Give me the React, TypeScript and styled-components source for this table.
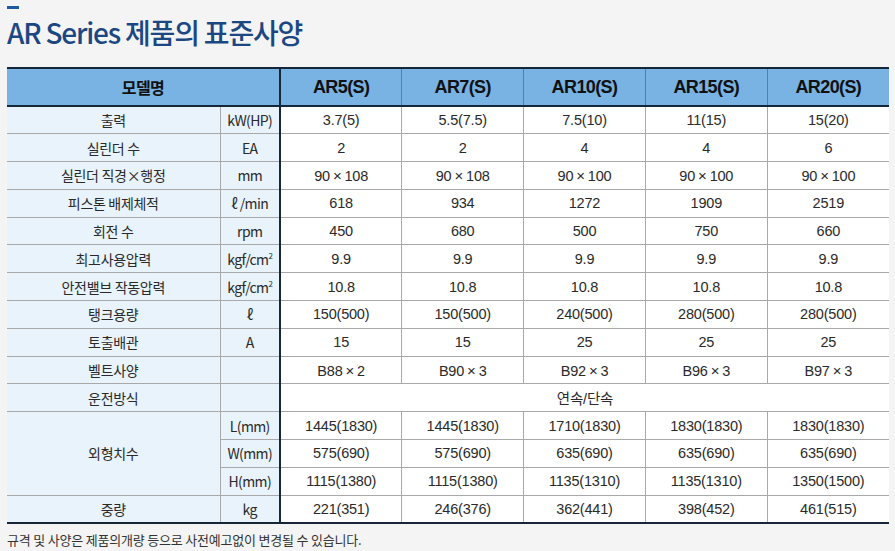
import React from "react";
import styled, { createGlobalStyle } from "styled-components";

const Global = createGlobalStyle`
  html, body { margin: 0; padding: 0; background: #f4f4f4; }
  body { font-family: "Noto Sans CJK KR", "Noto Sans", sans-serif; }
`;

const Page = styled.div`
  width: 895px;
  height: 551px;
  padding: 6px 6px 0 7px;
  box-sizing: border-box;
  background: #f4f4f4;
  overflow: hidden;
`;

const Accent = styled.div`
  width: 12px;
  height: 3px;
  background: #1f5aa0;
`;

const Title = styled.h1`
  margin: 5px 0 0 0;
  font-family: "Noto Sans CJK KR", sans-serif;
  font-weight: 500;
  font-size: 28px;
  line-height: 36px;
  letter-spacing: -1.2px;
  color: #1b4783;
`;

const Table = styled.table`
  margin-top: 17px;
  width: 882px;
  border-collapse: collapse;
  table-layout: fixed;
  border-top: 2px solid #17273a;
  border-bottom: 2px solid #17273a;
`;

const HeadCell = styled.th<{ $divider?: boolean }>`
  height: 36px;
  padding: 0;
  background: #79b3e4;
  color: #111;
  font-family: "Liberation Sans", "Noto Sans CJK KR", sans-serif;
  font-size: 18px;
  font-weight: 700;
  letter-spacing: -0.6px;
  text-align: center;
  border-left: 1px solid #4e7fb0;
  border-right: ${(p) => (p.$divider ? "2px solid #17273a" : "1px solid #4e7fb0")};
  border-bottom: 2px solid #17273a;
  &:first-child { border-left: none; }
  &:last-child { border-right: none; }
`;

const HeadLabel = styled.span`
  font-family: "Noto Sans CJK KR", sans-serif;
  font-size: 16px;
  font-weight: 700;
`;

const Row = styled.tr`
  height: 27.8px;
`;

const LabelCell = styled.td<{ $unit?: boolean }>`
  padding: 0;
  background: #e8f3fc;
  color: #2a2a2a;
  font-family: "Noto Sans CJK KR", sans-serif;
  font-size: 14px;
  text-align: center;
  letter-spacing: ${(p) => (p.$unit ? "-0.6px" : "-0.3px")};
  border: 1px solid #a9a9a9;
  border-left: ${(p) => (p.$unit ? "1px solid #a9a9a9" : "none")};
  border-right: ${(p) => (p.$unit ? "2px solid #17273a" : "1px solid #a9a9a9")};
  white-space: nowrap;
`;

const DataCell = styled.td`
  padding: 0;
  background: #fff;
  color: #2a2a2a;
  font-family: "Liberation Sans", "Noto Sans CJK KR", sans-serif;
  font-size: 14.5px;
  text-align: center;
  letter-spacing: -0.2px;
  border: 1px solid #a9a9a9;
  &:last-child { border-right: none; }
  white-space: nowrap;
`;

const Times = styled.span`
  padding: 0 3px;
  font-size: 15px;
`;

const Sup = styled.sup`
  font-size: 8px;
  vertical-align: 6px;
  line-height: 0;
`;

const Note = styled.p`
  margin: 8px 0 0 0;
  font-family: "Noto Sans CJK KR", sans-serif;
  font-size: 13px;
  line-height: 16px;
  color: #333;
  letter-spacing: -0.2px;
`;

const models = ["AR5(S)", "AR7(S)", "AR10(S)", "AR15(S)", "AR20(S)"];

type Spec = { label: string; unit: React.ReactNode; values: string[] };

const kgf = (
  <>
    kgf/cm<Sup>2</Sup>
  </>
);

const renderValue = (v: string) => {
  if (!v.includes("×")) return v;
  const [a, b] = v.split("×");
  return (
    <>
      {a}
      <Times>×</Times>
      {b}
    </>
  );
};

const specs: Spec[] = [
  { label: "출력", unit: "kW(HP)", values: ["3.7(5)", "5.5(7.5)", "7.5(10)", "11(15)", "15(20)"] },
  { label: "실린더 수", unit: "EA", values: ["2", "2", "4", "4", "6"] },
  { label: "실린더 직경×행정", unit: "mm", values: ["90×108", "90×108", "90×100", "90×100", "90×100"] },
  { label: "피스톤 배제체적", unit: "ℓ /min", values: ["618", "934", "1272", "1909", "2519"] },
  { label: "회전 수", unit: "rpm", values: ["450", "680", "500", "750", "660"] },
  { label: "최고사용압력", unit: kgf, values: ["9.9", "9.9", "9.9", "9.9", "9.9"] },
  { label: "안전밸브 작동압력", unit: kgf, values: ["10.8", "10.8", "10.8", "10.8", "10.8"] },
  { label: "탱크용량", unit: "ℓ", values: ["150(500)", "150(500)", "240(500)", "280(500)", "280(500)"] },
  { label: "토출배관", unit: "A", values: ["15", "15", "25", "25", "25"] },
  { label: "벨트사양", unit: "", values: ["B88×2", "B90×3", "B92×3", "B96×3", "B97×3"] },
];

const dims = [
  { unit: "L(mm)", values: ["1445(1830)", "1445(1830)", "1710(1830)", "1830(1830)", "1830(1830)"] },
  { unit: "W(mm)", values: ["575(690)", "575(690)", "635(690)", "635(690)", "635(690)"] },
  { unit: "H(mm)", values: ["1115(1380)", "1115(1380)", "1135(1310)", "1135(1310)", "1350(1500)"] },
];

const weights = ["221(351)", "246(376)", "362(441)", "398(452)", "461(515)"];

export default function App() {
  return (
    <Page>
      <Global />
      <Accent />
      <Title>AR Series 제품의 표준사양</Title>
      <Table>
        <colgroup>
          <col style={{ width: 213 }} />
          <col style={{ width: 60 }} />
          {models.map((m) => (
            <col key={m} />
          ))}
        </colgroup>
        <thead>
          <tr>
            <HeadCell colSpan={2} $divider>
              <HeadLabel>모델명</HeadLabel>
            </HeadCell>
            {models.map((m) => (
              <HeadCell key={m}>{m}</HeadCell>
            ))}
          </tr>
        </thead>
        <tbody>
          {specs.map((s) => (
            <Row key={s.label}>
              <LabelCell>{s.label}</LabelCell>
              <LabelCell $unit>{s.unit}</LabelCell>
              {s.values.map((v, i) => (
                <DataCell key={i}>{renderValue(v)}</DataCell>
              ))}
            </Row>
          ))}
          <Row>
            <LabelCell>운전방식</LabelCell>
            <LabelCell $unit />
            <DataCell colSpan={5}>연속/단속</DataCell>
          </Row>
          {dims.map((d, idx) => (
            <Row key={d.unit}>
              {idx === 0 && <LabelCell rowSpan={3}>외형치수</LabelCell>}
              <LabelCell $unit>{d.unit}</LabelCell>
              {d.values.map((v, i) => (
                <DataCell key={i}>{v}</DataCell>
              ))}
            </Row>
          ))}
          <Row>
            <LabelCell>중량</LabelCell>
            <LabelCell $unit>kg</LabelCell>
            {weights.map((v, i) => (
              <DataCell key={i}>{v}</DataCell>
            ))}
          </Row>
        </tbody>
      </Table>
      <Note>규격 및 사양은 제품의개량 등으로 사전예고없이 변경될 수 있습니다.</Note>
    </Page>
  );
}
